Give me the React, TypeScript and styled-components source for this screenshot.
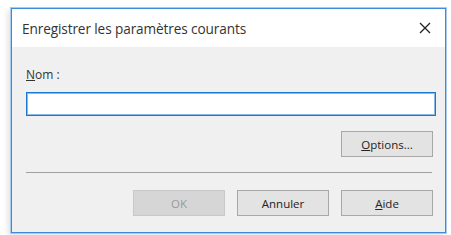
import React from 'react';
import styled, { createGlobalStyle } from 'styled-components';

const Global = createGlobalStyle`
  html, body {
    margin: 0;
    padding: 0;
    background: #ffffff;
  }
  body {
    font-family: "Open Sans", "Noto Sans", sans-serif;
  }
`;

const Page = styled.div`
  width: 451px;
  height: 235px;
  padding: 8px 0 0 11px;
  box-sizing: border-box;
`;

const Window = styled.div`
  width: 435px;
  height: 225px;
  box-sizing: border-box;
  border: 1px solid #3c8ad8;
  box-shadow: 0 0 0 1px #a9cbee, -3px 2px 6px rgba(0, 0, 0, 0.12);
  background: #f0f0f0;
  display: flex;
  flex-direction: column;
`;

const TitleBar = styled.div`
  height: 38px;
  background: #ffffff;
  display: flex;
  align-items: center;
  justify-content: space-between;
  padding: 0 10px 0 10px;
`;

const Title = styled.span`
  font-size: 13.6px;
  color: #333;
  letter-spacing: -0.1px;
`;

const CloseButton = styled.button`
  border: none;
  background: transparent;
  padding: 0;
  width: 20px;
  height: 20px;
  display: flex;
  align-items: center;
  justify-content: center;
`;

const Body = styled.div`
  flex: 1;
  display: flex;
  flex-direction: column;
  padding: 21px 10px 0 14px;
`;

const Label = styled.label`
  font-size: 12px;
  color: #333;
  line-height: 14px;
`;

const TextInput = styled.input`
  margin-top: 10px;
  height: 24px;
  box-sizing: border-box;
  border: 1px solid #1b78d0;
  box-shadow: inset 0 0 0 1px #8ab8e6;
  background: #fff;
  outline: none;
  width: 410px;
`;

const Row = styled.div<{ $top: number }>`
  display: flex;
  justify-content: flex-end;
  gap: 12px;
  margin-top: ${p => p.$top}px;
  padding-right: 2px;
`;

const Button = styled.button<{ $disabled?: boolean }>`
  width: 92px;
  height: 26px;
  box-sizing: border-box;
  border: 1px solid ${p => (p.$disabled ? '#c8c8c8' : '#a8a8a8')};
  background: ${p => (p.$disabled ? '#d6d6d6' : '#e3e3e3')};
  color: ${p => (p.$disabled ? '#9a9a9a' : '#222')};
  font-family: "Open Sans", "Noto Sans", sans-serif;
  font-size: 11.5px;
  padding: 0;
`;

const Separator = styled.hr`
  margin: 15px 2px 0 0;
  border: none;
  border-top: 1px solid #a0a0a0;
  width: 406px;
`;

export default function App() {
  return (
    <>
      <Global />
      <Page>
        <Window>
          <TitleBar>
            <Title>Enregistrer les paramètres courants</Title>
            <CloseButton aria-label="Fermer">
              <svg width="12" height="12" viewBox="0 0 12 12">
                <path d="M1 1 L11 11 M11 1 L1 11" stroke="#222" strokeWidth="1.3" />
              </svg>
            </CloseButton>
          </TitleBar>
          <Body>
            <Label>
              <u>N</u>om :
            </Label>
            <TextInput />
            <Row $top={15}>
              <Button>
                <u>O</u>ptions...
              </Button>
            </Row>
            <Separator />
            <Row $top={17}>
              <Button $disabled>OK</Button>
              <Button>Annuler</Button>
              <Button>
                <u>A</u>ide
              </Button>
            </Row>
          </Body>
        </Window>
      </Page>
    </>
  );
}
